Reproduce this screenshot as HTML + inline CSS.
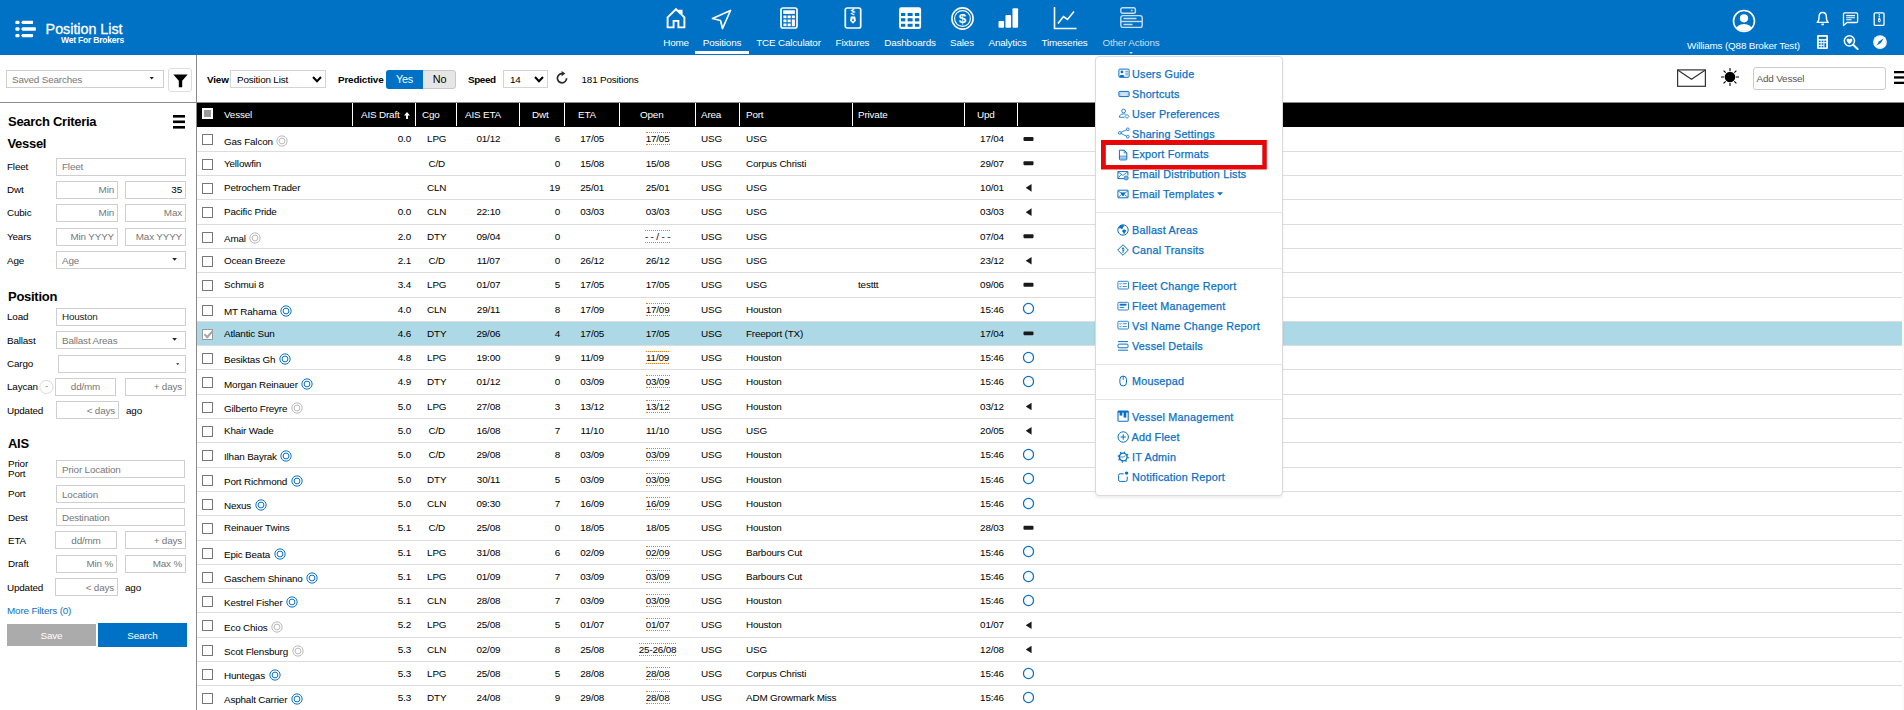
<!DOCTYPE html>
<html lang="en"><head><meta charset="utf-8"><title>Position List</title>
<style>
html,body{margin:0;padding:0}
body{width:1904px;height:710px;overflow:hidden;position:relative;background:#fff;color:#000;font:9.9px/1 "Liberation Sans",sans-serif;letter-spacing:-0.17px}
*{box-sizing:border-box}
i{font-style:normal}
.abs{position:absolute}
/* header */
#hdr{position:absolute;left:0;top:0;width:1904px;height:55px;background:#0072c6;color:#fff}
#hdr svg{position:absolute;overflow:visible}
.title{position:absolute;left:45.6px;top:21.1px;font-size:14.4px;line-height:16px;letter-spacing:-.05px;white-space:nowrap;-webkit-text-stroke:.3px #fff}
.subtitle{position:absolute;left:61px;top:34.6px;font-size:8.5px;line-height:10px;font-weight:bold;letter-spacing:-0.2px;white-space:nowrap}
.nav{position:absolute;top:37px;height:12px;line-height:12px;white-space:nowrap;text-align:center;transform:translateX(-50%)}
.nav.dim{color:#c9def1}
.uname{position:absolute;left:1687px;top:40px;line-height:12px;white-space:nowrap}
.ul{position:absolute;left:695px;top:51px;width:54px;height:3px;background:#fff}
/* sidebar */
#side{position:absolute;left:0;top:55px;width:197px;height:655px;border-right:1px solid #8a8a8a}
#side .hl{position:absolute;left:0;top:47px;width:196px;height:1px;background:#8a8a8a}
.lbl{position:absolute;left:7px;line-height:12px;white-space:nowrap}
.inp{position:absolute;border:1px solid #cfcfcf;background:#fff;line-height:16px;white-space:nowrap;color:#777;padding:0 3px}
.inp.r{text-align:right}
.inp.c{text-align:center}
.inp.v{color:#000}
.inp.l{padding-left:5px}
.h1{position:absolute;left:8px;font-weight:bold;font-size:13px;line-height:16px;letter-spacing:-0.28px;white-space:nowrap}
.caret{position:absolute;width:4.8px;height:2.8px;background:#222;clip-path:polygon(0 0,100% 0,50% 100%)}
/* toolbar */
.tb{position:absolute;white-space:nowrap;line-height:12px}
.tb.b{font-weight:bold}
.sel{position:absolute;border:1px solid #d4d4d4;background:#fff;line-height:15px;padding-left:6px;white-space:nowrap}
/* table */
.thead{position:absolute;left:197px;top:102px;width:1707px;height:25px;background:#000;color:#fff;border-top:1px solid #8a8a8a}
.th{position:absolute;top:0;line-height:23px;white-space:nowrap}
.vs{position:absolute;top:0;width:1px;height:23px;background:#fff}
.hcb{position:absolute;left:5px;top:5px;width:11px;height:11px;background:#fff;border:1px solid #fff}
.hcb:after{content:"";position:absolute;left:1px;top:1px;width:7px;height:7px;background:#9a9a9a}
.sort{position:relative;top:1px;margin-left:4px}
.tbody{position:absolute;left:197px;top:127px;width:1707px;height:583px;background:linear-gradient(#fafafa,#fafafa) right/2px 100% no-repeat}
.tr{position:absolute;left:0;width:1705px;height:24.3px;line-height:23.4px;border-bottom:1px solid #ddd}
.tr.hi{background:#add8e6}
.c{position:absolute;top:0;white-space:nowrap}
.cb{position:absolute;left:5px;top:7px;width:11px;height:11px;border:1px solid #767676;background:#fff;border-radius:.5px}
.cb.on{background:#fff;border-color:#9a9a9a}
.cb.on:after{content:"";position:absolute;left:2.6px;top:-0.6px;width:3.4px;height:7px;border:solid #a6a6a6;border-width:0 2.1px 2.1px 0;transform:rotate(42deg)}
.vn{left:27px}
.vn.low{top:2.1px}
.ring{position:relative;top:0px;margin-left:3.6px;vertical-align:-2px}
.dr{left:155px;width:59px;text-align:right}
.cg{left:219px;width:41.4px;text-align:center}
.ae{left:260px;width:62.8px;text-align:center}
.dw{left:322px;width:41px;text-align:right}
.et{left:367.7px;width:55px;text-align:center}
.op{left:422.6px;width:76px;text-align:center}
.ar{left:504px}
.po{left:549px}
.pr{left:661px}
.up{left:768.5px;width:53px;text-align:center}
.dot{font-weight:normal;display:inline-block;line-height:11px;border-top:1px dotted #f57c00;border-bottom:1px dotted #f57c00;padding:0}
.ic{position:absolute}
.dash{left:825.5px;top:8.6px;width:12px;height:6px;background:#1a1a1a;clip-path:inset(1px 1px 1.1px 1px round 1px)}
.tri{left:828.7px;top:8px;width:5.9px;height:7.6px;background:#1a1a1a;clip-path:polygon(100% 0,100% 100%,0 50%)}
.circ{left:824.8px;top:4.8px}
/* menu */
#menu{position:absolute;left:1095px;top:56px;width:188px;height:440px;background:#fff;border:1px solid #dadada;border-radius:4px;box-shadow:0 2px 3px rgba(0,0,0,.07);color:#0b70c4;font-size:10.8px;letter-spacing:.22px;-webkit-text-stroke:.25px #0b70c4}
.mi{position:absolute;left:36px;line-height:14px;white-space:nowrap}
.mic{position:absolute;left:22px;overflow:visible}
.sep{position:absolute;left:0;width:186px;height:1px;background:#e5e5e5}
#red{position:absolute;left:1100px;top:140px}

</style></head>
<body>
<div id="hdr">
<svg style="left:15px;top:20px" width="22" height="18" viewBox="0 0 22 18" fill="#fff">
<rect x="0.4" y="0.7" width="4.1" height="3.4" rx="1.2"/><rect x="0.4" y="7.3" width="4.1" height="3.4" rx="1.2"/><rect x="0.4" y="13.9" width="4.1" height="3.4" rx="1.2"/>
<path d="M6 2.4 L7.6 0.7 H17.3 Q18.1 0.7 18.1 1.5 V3.3 Q18.1 4.1 17.3 4.1 H7.6 Z"/>
<path d="M6 9 L7.6 7.3 H20.1 Q20.9 7.3 20.9 8.1 V9.9 Q20.9 10.7 20.1 10.7 H7.6 Z"/>
<path d="M6 15.6 L7.6 13.9 H17.3 Q18.1 13.9 18.1 14.7 V16.5 Q18.1 17.3 17.3 17.3 H7.6 Z"/>
</svg>
<div class="title">Position List</div>
<div class="subtitle">Wet For Brokers</div>

<!-- nav icons -->
<svg style="left:666px;top:7px" width="20" height="22" viewBox="0 0 20 22" fill="none" stroke="#fff" stroke-width="1.9" stroke-linejoin="miter"><path d="M1.6 10.4 L10 2.2 L13.4 5.5 V3.6 H15.6 V7.6 L18.4 10.4 V20.4 H12.4 V13.9 H7.6 V20.4 H1.6 Z"/><rect x="13.4" y="3.2" width="2.2" height="4" fill="#fff" stroke="none"/></svg>
<svg style="left:711px;top:9px" width="21" height="21" viewBox="0 0 21 21" fill="none" stroke="#fff" stroke-width="1.7" stroke-linejoin="round"><path d="M1.5 9.5 L19.5 1.5 L11.5 19.5 L9.5 11.5 Z"/></svg>
<svg style="left:780px;top:7px" width="18" height="22" viewBox="0 0 18 22" fill="none" stroke="#fff"><rect x="1" y="1" width="16" height="20" rx="2" stroke-width="1.7"/><rect x="3.2" y="3.3" width="11.7" height="3.6" fill="#fff" stroke="none"/><g fill="#fff" stroke="none"><rect x="3.4" y="8.5" width="3.1" height="2.7"/><rect x="7.6" y="8.5" width="3.1" height="2.7"/><rect x="11.8" y="8.5" width="3.1" height="2.7"/><rect x="3.4" y="12.5" width="3.1" height="2.7"/><rect x="7.6" y="12.5" width="3.1" height="2.7"/><rect x="11.8" y="12.5" width="3.1" height="6.7"/><rect x="3.4" y="16.5" width="3.1" height="2.7"/><rect x="7.6" y="16.5" width="3.1" height="2.7"/></g></svg>
<svg style="left:844px;top:7px" width="18" height="22" viewBox="0 0 18 22" fill="none" stroke="#fff"><rect x="1.3" y="1" width="15.4" height="20" rx="1.8" stroke-width="1.7"/><path d="M10.4 2 L7.6 3.5 L10.4 5 L7.6 6.5 L10.4 8" stroke-width="1.3"/><path d="M6.8 9.4 H11.2 L11.9 13.8 L9 16.8 L6.1 13.8 Z" fill="#fff" stroke="none"/><path d="M9 10.8 L10 13.4 L9 14.6 L8 13.4 Z" fill="#0072c6" stroke="none"/></svg>
<svg style="left:898px;top:7px" width="24" height="22" viewBox="0 0 24 22"><rect x="1.1" y="0.2" width="22" height="21.7" rx="2.2" fill="#fff"/><g fill="#0072c6"><rect x="3" y="6" width="4.3" height="3"/><rect x="9.6" y="6" width="5" height="3"/><rect x="16.9" y="6" width="4.4" height="3"/><rect x="3" y="11.2" width="4.3" height="3.2"/><rect x="9.6" y="11.2" width="5" height="3.2"/><rect x="16.9" y="11.2" width="4.4" height="3.2"/><rect x="3" y="16.8" width="4.3" height="3"/><rect x="9.6" y="16.8" width="5" height="3"/><rect x="16.9" y="16.8" width="4.4" height="3"/></g></svg>
<svg style="left:951px;top:6.6px" width="23" height="23" viewBox="0 0 23 23" fill="none" stroke="#fff"><circle cx="11.5" cy="11.5" r="10.6" stroke-width="1.6"/><circle cx="11.5" cy="11.5" r="7.9" stroke-width="1.1"/><text x="11.5" y="16.3" text-anchor="middle" font-family="Liberation Sans, sans-serif" font-weight="bold" font-size="13.5" fill="#fff" stroke="none" letter-spacing="0">$</text></svg>
<svg style="left:997.7px;top:8px" width="21" height="20" viewBox="0 0 21 20" fill="#fff"><rect x="0.5" y="13" width="5.6" height="6.8" rx="1"/><rect x="7.5" y="7" width="5.6" height="12.8" rx="1"/><rect x="14.5" y="0.3" width="5.6" height="19.5" rx="1"/></svg>
<svg style="left:1053px;top:7px" width="24" height="23" viewBox="0 0 24 23" fill="none" stroke="#fff" stroke-width="1.6"><path d="M1.5 0 V21.5 H23.5"/><path d="M5 16.5 L10.5 9.5 L14.5 12.5 L21 4.5"/></svg>
<svg style="left:1120px;top:7px" width="23" height="22" viewBox="0 0 23 22" fill="none" stroke="#c9def1" stroke-width="1.4"><rect x="0.8" y="0.8" width="14.6" height="5.4" rx="1.8"/><rect x="0.8" y="8.6" width="21.4" height="11.8" rx="2.2"/><path d="M0.8 14.5 H22.2"/><path d="M3.5 11.5 H16.5 M3.5 17.5 H12.5 M11 3.5 H12.6" stroke-width="1.3"/></svg>
<div class="nav" style="left:676px">Home</div>
<div class="nav" style="left:722px">Positions</div>
<div class="nav" style="left:788.5px">TCE Calculator</div>
<div class="nav" style="left:852.5px">Fixtures</div>
<div class="nav" style="left:910px">Dashboards</div>
<div class="nav" style="left:962px">Sales</div>
<div class="nav" style="left:1007.5px">Analytics</div>
<div class="nav" style="left:1064.5px">Timeseries</div>
<div class="nav dim" style="left:1131px">Other Actions</div>
<div class="ul"></div>
<svg style="left:1129.4px;top:52px" width="4" height="2" viewBox="0 0 4 2"><path d="M0 0 H4 L2 2 Z" fill="#c9def1"/></svg>

<!-- user -->
<svg style="left:1732px;top:9px" width="24" height="24" viewBox="0 0 24 24"><defs><clipPath id="uc"><circle cx="12" cy="12" r="10"/></clipPath></defs><circle cx="12" cy="12" r="10.5" fill="none" stroke="#fff" stroke-width="1.6"/><circle cx="12" cy="9.3" r="4.1" fill="#fff"/><ellipse cx="12" cy="21.5" rx="8.3" ry="6.6" fill="#fff" clip-path="url(#uc)"/></svg>
<div class="uname">Williams (Q88 Broker Test)</div>
<!-- bell -->
<svg style="left:1816px;top:11px" width="14" height="16" viewBox="0 0 14 16" fill="none" stroke="#fff" stroke-width="1.4" stroke-linejoin="round"><path d="M1.2 11.4 C2.9 10.4 3 8.5 3 6.2 C3 3.3 4.6 1.5 6.7 1.5 C8.8 1.5 10.4 3.3 10.4 6.2 C10.4 8.5 10.5 10.4 12.2 11.4 Z"/><path d="M5.4 13.4 H8" stroke-width="1.7"/></svg>
<!-- chat -->
<svg style="left:1842px;top:12px" width="17" height="15" viewBox="0 0 17 15" fill="none" stroke="#fff" stroke-width="1.3" stroke-linejoin="round"><path d="M2.5 .9 H14.5 Q15.6 .9 15.6 2 V9.4 Q15.6 10.5 14.5 10.5 H5 L1.5 13.6 V2 Q1.5 .9 2.5 .9 Z"/><path d="M4.2 3.6 H13 M4.2 5.7 H13 M4.2 7.8 H9.6" stroke-width="1.1"/></svg>
<!-- zip -->
<svg style="left:1873px;top:12px" width="12" height="14" viewBox="0 0 12 14" fill="none" stroke="#fff" stroke-width="1.3"><rect x="1.2" y="0.8" width="9.8" height="12.6" rx="1"/><path d="M6.3 2 V7" stroke-width="1.3" stroke-dasharray="1.2 .6"/><path d="M5.2 6.6 H7.4 L7.7 9.2 L6.3 10.6 L4.9 9.2 Z" fill="#fff" stroke="none"/><circle cx="6.3" cy="8.6" r=".7" fill="#0072c6" stroke="none"/></svg>
<!-- calc -->
<svg style="left:1817px;top:35px" width="11" height="14" viewBox="0 0 11 14"><rect x="0" y="0" width="11" height="14" rx="1.2" fill="#fff"/><g fill="#0072c6"><rect x="1.8" y="1.8" width="7.4" height="2.3"/><rect x="1.8" y="5.6" width="1.8" height="1.6"/><rect x="4.6" y="5.6" width="1.8" height="1.6"/><rect x="7.4" y="5.6" width="1.8" height="1.6"/><rect x="1.8" y="8.2" width="1.8" height="1.6"/><rect x="4.6" y="8.2" width="1.8" height="1.6"/><rect x="7.4" y="8.2" width="1.8" height="4.2"/><rect x="1.8" y="10.8" width="1.8" height="1.6"/><rect x="4.6" y="10.8" width="1.8" height="1.6"/></g></svg>
<!-- search -->
<svg style="left:1843px;top:34px" width="16" height="16" viewBox="0 0 16 16" fill="none" stroke="#fff"><circle cx="6.4" cy="6.8" r="5.1" stroke-width="1.5"/><path d="M10.2 10.8 L14.6 15" stroke-width="2" stroke-linecap="round"/><path d="M6.5 9.9 C2.6 7.2 3.4 4.4 5 4.4 C6 4.4 6.5 5.3 6.5 5.3 C6.5 5.3 7 4.4 8 4.4 C9.6 4.4 10.4 7.2 6.5 9.9 Z" fill="#fff" stroke="none"/></svg>
<!-- compass -->
<svg style="left:1873px;top:35px" width="14" height="14" viewBox="0 0 14 14"><circle cx="7" cy="7.1" r="6.9" fill="#fff"/><circle cx="7" cy="7.1" r="5.6" fill="none" stroke="#0072c6" stroke-width=".5" stroke-dasharray=".6 1.6" opacity=".6"/><path d="M3.4 10.6 L6.2 6.2 L10.6 3.6 L7.8 7.9 Z" fill="#0072c6"/></svg>
</div>
<div id="side">
<div class="hl"></div>
<div class="inp l" style="left:6px;top:15px;width:158px;height:18px;padding-left:5px;line-height:17.4px">Saved Searches</div>
<i class="caret" style="left:149.3px;top:21.8px"></i>
<div class="abs" style="left:168.4px;top:13px;width:23.4px;height:24px;border:1px solid #ddd;border-radius:3px;background:#fff"></div>
<svg class="abs" style="left:172.5px;top:18.7px" width="15" height="14" viewBox="0 0 15 14"><path d="M0.3 0.5 H14.7 L9.2 6.8 V13.2 H5.8 V6.8 Z" fill="#000"/></svg>

<div class="h1" style="top:58.7px">Search Criteria</div>
<svg class="abs" style="left:173px;top:60px" width="12" height="14" viewBox="0 0 12 14"><rect x="0" y="0" width="12" height="2.6" fill="#000"/><rect x="0" y="5.5" width="12" height="2.6" fill="#000"/><rect x="0" y="11" width="12" height="2.6" fill="#000"/></svg>
<div class="h1" style="top:81px;left:7.4px">Vessel</div>

<div class="lbl" style="top:106px">Fleet</div>
<div class="inp l" style="left:56px;top:103px;width:130px;height:18px">Fleet</div>
<div class="lbl" style="top:129px">Dwt</div>
<div class="inp r" style="left:56px;top:126px;width:62px;height:18px">Min</div>
<div class="inp r v" style="left:125px;top:126px;width:61px;height:18px">35</div>
<div class="lbl" style="top:152px">Cubic</div>
<div class="inp r" style="left:56px;top:149px;width:62px;height:18px">Min</div>
<div class="inp r" style="left:125px;top:149px;width:61px;height:18px">Max</div>
<div class="lbl" style="top:176px">Years</div>
<div class="inp r" style="left:56px;top:173px;width:62px;height:18px">Min YYYY</div>
<div class="inp r" style="left:125px;top:173px;width:61px;height:18px">Max YYYY</div>
<div class="lbl" style="top:199.6px">Age</div>
<div class="inp l" style="left:56px;top:196px;width:130px;height:18px;line-height:17px">Age</div>
<i class="caret" style="left:172.2px;top:202.9px"></i>

<div class="h1" style="top:233.7px">Position</div>
<div class="lbl" style="top:256px">Load</div>
<div class="inp l v" style="left:56px;top:253px;width:130px;height:18px;color:#222">Houston</div>
<div class="lbl" style="top:280px">Ballast</div>
<div class="inp l" style="left:56px;top:276px;width:130px;height:18px;line-height:17px">Ballast Areas</div>
<i class="caret" style="left:172.2px;top:282.9px"></i>
<div class="lbl" style="top:303px">Cargo</div>
<div class="inp" style="left:58px;top:300px;width:128px;height:18px"></div>
<i class="caret" style="left:176.1px;top:308.2px;width:3.2px;height:1.9px"></i>
<div class="lbl" style="top:326px">Laycan</div>
<svg class="abs" style="left:39px;top:324px" width="16" height="16" viewBox="0 0 16 16"><circle cx="7.4" cy="8" r="6.6" fill="#fff" stroke="#d9d9d9" stroke-width="1"/></svg><div class="abs" style="left:40px;top:326px;width:13px;height:13px;color:#888;text-align:center;line-height:10px">-</div>
<div class="inp c" style="left:55px;top:323px;width:61px;height:18px">dd/mm</div>
<div class="inp r" style="left:125px;top:323px;width:61px;height:18px">+ days</div>
<div class="lbl" style="top:350px">Updated</div>
<div class="inp r" style="left:56px;top:346px;width:63px;height:18px;line-height:18px">&lt; days</div>
<div class="lbl" style="left:126px;top:350px">ago</div>

<div class="h1" style="top:380.7px">AIS</div>
<div class="lbl" style="left:8px;top:403.7px;line-height:10.4px">Prior<br>Port</div>
<div class="inp l" style="left:56px;top:405px;width:129px;height:18px;padding-left:5px;line-height:17px">Prior Location</div>
<div class="lbl" style="left:8px;top:433px">Port</div>
<div class="inp l" style="left:56px;top:430px;width:129px;height:18px;padding-left:5px;line-height:17px">Location</div>
<div class="lbl" style="left:8px;top:457px">Dest</div>
<div class="inp l" style="left:56px;top:453px;width:129px;height:18px;padding-left:5px;line-height:17px">Destination</div>
<div class="lbl" style="left:8px;top:480px">ETA</div>
<div class="inp c" style="left:55px;top:476px;width:62px;height:18px;line-height:17px">dd/mm</div>
<div class="inp r" style="left:125px;top:476px;width:61px;height:18px;line-height:17px">+ days</div>
<div class="lbl" style="left:8px;top:503px">Draft</div>
<div class="inp r" style="left:56px;top:500px;width:61px;height:18px">Min %</div>
<div class="inp r" style="left:125px;top:500px;width:61px;height:18px">Max %</div>
<div class="lbl" style="top:527px">Updated</div>
<div class="inp r" style="left:55px;top:523px;width:63px;height:18px;line-height:17.6px">&lt; days</div>
<div class="lbl" style="left:125px;top:527px">ago</div>
<div class="lbl" style="top:550px;color:#0b70c4">More Filters (0)</div>
<div class="abs" style="left:7px;top:569px;width:89px;height:22px;background:#ababab;color:#fff;text-align:center;line-height:23.4px">Save</div>
<div class="abs" style="left:98px;top:568px;width:89px;height:24px;background:#0072c6;color:#fff;text-align:center;line-height:25.4px">Search</div>
</div>
<div id="tbar">
<div class="tb b" style="left:207px;top:73.6px">View</div>
<div class="sel" style="left:230px;top:70px;width:96px;height:18px;line-height:17px">Position List</div>
<svg class="abs" style="left:312px;top:76px" width="10" height="7" viewBox="0 0 10 7"><path d="M1 1 L5 5.2 L9 1" fill="none" stroke="#000" stroke-width="2"/></svg>
<div class="tb b" style="left:338px;top:73.6px">Predictive</div>
<div class="abs" style="left:386px;top:70px;width:70px;height:19px;border-radius:3px;background:#e6e6e6;border:1px solid #c8c8c8"></div>
<div class="abs" style="left:386px;top:70px;width:37px;height:19px;border-radius:3px 0 0 3px;background:#0072c6;color:#fff;font-size:10.8px;line-height:18px;text-align:center">Yes</div>
<div class="abs" style="left:423px;top:70px;width:33px;height:19px;font-size:10.8px;line-height:18px;text-align:center">No</div>
<div class="tb b" style="left:468px;top:73.6px;letter-spacing:-.4px">Speed</div>
<div class="sel" style="left:503px;top:70px;width:45px;height:18px;line-height:17px">14</div>
<svg class="abs" style="left:534px;top:76px" width="10" height="7" viewBox="0 0 10 7"><path d="M1 1 L5 5.2 L9 1" fill="none" stroke="#000" stroke-width="2"/></svg>
<svg class="abs" style="left:556px;top:71px" width="12" height="13" viewBox="0 0 12 13"><path d="M6.3 2.6 A4.6 4.6 0 1 0 10.6 7.2" fill="none" stroke="#2a2a2a" stroke-width="1.7"/><path d="M5.6 0 L9.4 2.6 L5.6 5.2 Z" fill="#2a2a2a"/></svg>
<div class="tb" style="left:581.5px;top:73.6px">181 Positions</div>

<svg class="abs" style="left:1677px;top:68.5px" width="29" height="18" viewBox="0 0 29 18" fill="none" stroke="#333" stroke-width="1.2"><rect x="0.6" y="0.9" width="27.8" height="16.4"/><path d="M1 1.3 L14.5 10.3 L28 1.3"/></svg>
<svg class="abs" style="left:1720px;top:67px" width="20" height="20" viewBox="0 0 20 20"><circle cx="10" cy="10" r="5.3" fill="#000"/><g stroke="#000" stroke-width="1.1"><path d="M10 1 V4 M10 16 V19 M1 10 H4 M16 10 H19 M3.6 3.6 L5.7 5.7 M14.3 14.3 L16.4 16.4 M3.6 16.4 L5.7 14.3 M14.3 5.7 L16.4 3.6"/></g></svg>
<div class="abs" style="left:1753px;top:67px;width:133px;height:23px;border:1px solid #ccc;border-radius:3px;color:#555;line-height:22px;padding-left:2.6px">Add Vessel</div>
<svg class="abs" style="left:1894px;top:71px" width="10" height="14" viewBox="0 0 10 14"><rect x="0" y="0" width="12" height="2.3" fill="#000"/><rect x="0" y="5.3" width="12" height="2.3" fill="#000"/><rect x="0" y="10.7" width="12" height="2.3" fill="#000"/></svg>
</div>
<div class="thead">
<span class="hcb"></span>
<span class="th" style="left:27px">Vessel</span>
<span class="th" style="left:164px">AIS Draft<svg class="sort" width="6" height="7" viewBox="0 0 7 8"><path d="M3.5 0 L7 4 H4.6 V8 H2.4 V4 H0 Z" fill="#fff"/></svg></span>
<span class="th" style="left:225px">Cgo</span>
<span class="th" style="left:268px">AIS ETA</span>
<span class="th" style="left:335px">Dwt</span>
<span class="th" style="left:381px">ETA</span>
<span class="th" style="left:443px">Open</span>
<span class="th" style="left:504px">Area</span>
<span class="th" style="left:549px">Port</span>
<span class="th" style="left:661px">Private</span>
<span class="th" style="left:780px">Upd</span>
<i class="vs" style="left:155px"></i><i class="vs" style="left:218px"></i><i class="vs" style="left:259px"></i><i class="vs" style="left:322px"></i><i class="vs" style="left:367px"></i><i class="vs" style="left:422px"></i><i class="vs" style="left:498px"></i><i class="vs" style="left:542px"></i><i class="vs" style="left:655px"></i><i class="vs" style="left:767px"></i><i class="vs" style="left:820px"></i>
</div>
<div class="tbody">
<div class="tr" style="top:0.45px"><span class="cb"></span><span class="c vn low">Gas Falcon<svg class="ring" width="12" height="12" viewBox="0 0 12 12"><circle cx="6" cy="6" r="5.15" fill="none" stroke="#b9b9b9" stroke-width="1"/><circle cx="6" cy="6" r="2.9" fill="none" stroke="#b9b9b9" stroke-width="1"/></svg></span><span class="c dr">0.0</span><span class="c cg">LPG</span><span class="c ae">01/12</span><span class="c dw">6</span><span class="c et">17/05</span><span class="c op"><b class="dot">17/05</b></span><span class="c ar">USG</span><span class="c po">USG</span><span class="c pr"></span><span class="c up">17/04</span><i class="ic dash"></i></div>
<div class="tr" style="top:24.75px"><span class="cb"></span><span class="c vn">Yellowfin</span><span class="c dr"></span><span class="c cg">C/D</span><span class="c ae"></span><span class="c dw">0</span><span class="c et">15/08</span><span class="c op">15/08</span><span class="c ar">USG</span><span class="c po">Corpus Christi</span><span class="c pr"></span><span class="c up">29/07</span><i class="ic dash"></i></div>
<div class="tr" style="top:49.05px"><span class="cb"></span><span class="c vn">Petrochem Trader</span><span class="c dr"></span><span class="c cg">CLN</span><span class="c ae"></span><span class="c dw">19</span><span class="c et">25/01</span><span class="c op">25/01</span><span class="c ar">USG</span><span class="c po">USG</span><span class="c pr"></span><span class="c up">10/01</span><i class="ic tri"></i></div>
<div class="tr" style="top:73.35px"><span class="cb"></span><span class="c vn">Pacific Pride</span><span class="c dr">0.0</span><span class="c cg">CLN</span><span class="c ae">22:10</span><span class="c dw">0</span><span class="c et">03/03</span><span class="c op">03/03</span><span class="c ar">USG</span><span class="c po">USG</span><span class="c pr"></span><span class="c up">03/03</span><i class="ic tri"></i></div>
<div class="tr" style="top:97.65px"><span class="cb"></span><span class="c vn low">Amal<svg class="ring" width="12" height="12" viewBox="0 0 12 12"><circle cx="6" cy="6" r="5.15" fill="none" stroke="#b9b9b9" stroke-width="1"/><circle cx="6" cy="6" r="2.9" fill="none" stroke="#b9b9b9" stroke-width="1"/></svg></span><span class="c dr">2.0</span><span class="c cg">DTY</span><span class="c ae">09/04</span><span class="c dw">0</span><span class="c et"></span><span class="c op"><b class="dot">- - / - -</b></span><span class="c ar">USG</span><span class="c po">USG</span><span class="c pr"></span><span class="c up">07/04</span><i class="ic dash"></i></div>
<div class="tr" style="top:121.95px"><span class="cb"></span><span class="c vn">Ocean Breeze</span><span class="c dr">2.1</span><span class="c cg">C/D</span><span class="c ae">11/07</span><span class="c dw">0</span><span class="c et">26/12</span><span class="c op">26/12</span><span class="c ar">USG</span><span class="c po">USG</span><span class="c pr"></span><span class="c up">23/12</span><i class="ic tri"></i></div>
<div class="tr" style="top:146.25px"><span class="cb"></span><span class="c vn">Schmui 8</span><span class="c dr">3.4</span><span class="c cg">LPG</span><span class="c ae">01/07</span><span class="c dw">5</span><span class="c et">17/05</span><span class="c op">17/05</span><span class="c ar">USG</span><span class="c po">USG</span><span class="c pr">testtt</span><span class="c up">09/06</span><i class="ic dash"></i></div>
<div class="tr" style="top:170.55px"><span class="cb"></span><span class="c vn low">MT Rahama<svg class="ring" width="12" height="12" viewBox="0 0 12 12"><circle cx="6" cy="6" r="5.15" fill="none" stroke="#0b70c4" stroke-width="1"/><circle cx="6" cy="6" r="2.9" fill="none" stroke="#0b70c4" stroke-width="1"/></svg></span><span class="c dr">4.0</span><span class="c cg">CLN</span><span class="c ae">29/11</span><span class="c dw">8</span><span class="c et">17/09</span><span class="c op"><b class="dot">17/09</b></span><span class="c ar">USG</span><span class="c po">Houston</span><span class="c pr"></span><span class="c up">15:46</span><svg class="ic circ" width="13" height="13" viewBox="0 0 13 13"><circle cx="6.5" cy="6.5" r="5.05" fill="none" stroke="#0b70c4" stroke-width="1.25"/></svg></div>
<div class="tr hi" style="top:194.85px"><span class="cb on"></span><span class="c vn">Atlantic Sun</span><span class="c dr">4.6</span><span class="c cg">DTY</span><span class="c ae">29/06</span><span class="c dw">4</span><span class="c et">17/05</span><span class="c op">17/05</span><span class="c ar">USG</span><span class="c po">Freeport (TX)</span><span class="c pr"></span><span class="c up">17/04</span><i class="ic dash"></i></div>
<div class="tr" style="top:219.15px"><span class="cb"></span><span class="c vn low">Besiktas Gh<svg class="ring" width="12" height="12" viewBox="0 0 12 12"><circle cx="6" cy="6" r="5.15" fill="none" stroke="#0b70c4" stroke-width="1"/><circle cx="6" cy="6" r="2.9" fill="none" stroke="#0b70c4" stroke-width="1"/></svg></span><span class="c dr">4.8</span><span class="c cg">LPG</span><span class="c ae">19:00</span><span class="c dw">9</span><span class="c et">11/09</span><span class="c op"><b class="dot">11/09</b></span><span class="c ar">USG</span><span class="c po">Houston</span><span class="c pr"></span><span class="c up">15:46</span><svg class="ic circ" width="13" height="13" viewBox="0 0 13 13"><circle cx="6.5" cy="6.5" r="5.05" fill="none" stroke="#0b70c4" stroke-width="1.25"/></svg></div>
<div class="tr" style="top:243.45px"><span class="cb"></span><span class="c vn low">Morgan Reinauer<svg class="ring" width="12" height="12" viewBox="0 0 12 12"><circle cx="6" cy="6" r="5.15" fill="none" stroke="#0b70c4" stroke-width="1"/><circle cx="6" cy="6" r="2.9" fill="none" stroke="#0b70c4" stroke-width="1"/></svg></span><span class="c dr">4.9</span><span class="c cg">DTY</span><span class="c ae">01/12</span><span class="c dw">0</span><span class="c et">03/09</span><span class="c op"><b class="dot">03/09</b></span><span class="c ar">USG</span><span class="c po">Houston</span><span class="c pr"></span><span class="c up">15:46</span><svg class="ic circ" width="13" height="13" viewBox="0 0 13 13"><circle cx="6.5" cy="6.5" r="5.05" fill="none" stroke="#0b70c4" stroke-width="1.25"/></svg></div>
<div class="tr" style="top:267.75px"><span class="cb"></span><span class="c vn low">Gilberto Freyre<svg class="ring" width="12" height="12" viewBox="0 0 12 12"><circle cx="6" cy="6" r="5.15" fill="none" stroke="#b9b9b9" stroke-width="1"/><circle cx="6" cy="6" r="2.9" fill="none" stroke="#b9b9b9" stroke-width="1"/></svg></span><span class="c dr">5.0</span><span class="c cg">LPG</span><span class="c ae">27/08</span><span class="c dw">3</span><span class="c et">13/12</span><span class="c op"><b class="dot">13/12</b></span><span class="c ar">USG</span><span class="c po">Houston</span><span class="c pr"></span><span class="c up">03/12</span><i class="ic tri"></i></div>
<div class="tr" style="top:292.05px"><span class="cb"></span><span class="c vn">Khair Wade</span><span class="c dr">5.0</span><span class="c cg">C/D</span><span class="c ae">16/08</span><span class="c dw">7</span><span class="c et">11/10</span><span class="c op">11/10</span><span class="c ar">USG</span><span class="c po">USG</span><span class="c pr"></span><span class="c up">20/05</span><i class="ic tri"></i></div>
<div class="tr" style="top:316.35px"><span class="cb"></span><span class="c vn low">Ilhan Bayrak<svg class="ring" width="12" height="12" viewBox="0 0 12 12"><circle cx="6" cy="6" r="5.15" fill="none" stroke="#0b70c4" stroke-width="1"/><circle cx="6" cy="6" r="2.9" fill="none" stroke="#0b70c4" stroke-width="1"/></svg></span><span class="c dr">5.0</span><span class="c cg">C/D</span><span class="c ae">29/08</span><span class="c dw">8</span><span class="c et">03/09</span><span class="c op"><b class="dot">03/09</b></span><span class="c ar">USG</span><span class="c po">Houston</span><span class="c pr"></span><span class="c up">15:46</span><svg class="ic circ" width="13" height="13" viewBox="0 0 13 13"><circle cx="6.5" cy="6.5" r="5.05" fill="none" stroke="#0b70c4" stroke-width="1.25"/></svg></div>
<div class="tr" style="top:340.65px"><span class="cb"></span><span class="c vn low">Port Richmond<svg class="ring" width="12" height="12" viewBox="0 0 12 12"><circle cx="6" cy="6" r="5.15" fill="none" stroke="#0b70c4" stroke-width="1"/><circle cx="6" cy="6" r="2.9" fill="none" stroke="#0b70c4" stroke-width="1"/></svg></span><span class="c dr">5.0</span><span class="c cg">DTY</span><span class="c ae">30/11</span><span class="c dw">5</span><span class="c et">03/09</span><span class="c op"><b class="dot">03/09</b></span><span class="c ar">USG</span><span class="c po">Houston</span><span class="c pr"></span><span class="c up">15:46</span><svg class="ic circ" width="13" height="13" viewBox="0 0 13 13"><circle cx="6.5" cy="6.5" r="5.05" fill="none" stroke="#0b70c4" stroke-width="1.25"/></svg></div>
<div class="tr" style="top:364.95px"><span class="cb"></span><span class="c vn low">Nexus<svg class="ring" width="12" height="12" viewBox="0 0 12 12"><circle cx="6" cy="6" r="5.15" fill="none" stroke="#0b70c4" stroke-width="1"/><circle cx="6" cy="6" r="2.9" fill="none" stroke="#0b70c4" stroke-width="1"/></svg></span><span class="c dr">5.0</span><span class="c cg">CLN</span><span class="c ae">09:30</span><span class="c dw">7</span><span class="c et">16/09</span><span class="c op"><b class="dot">16/09</b></span><span class="c ar">USG</span><span class="c po">Houston</span><span class="c pr"></span><span class="c up">15:46</span><svg class="ic circ" width="13" height="13" viewBox="0 0 13 13"><circle cx="6.5" cy="6.5" r="5.05" fill="none" stroke="#0b70c4" stroke-width="1.25"/></svg></div>
<div class="tr" style="top:389.25px"><span class="cb"></span><span class="c vn">Reinauer Twins</span><span class="c dr">5.1</span><span class="c cg">C/D</span><span class="c ae">25/08</span><span class="c dw">0</span><span class="c et">18/05</span><span class="c op">18/05</span><span class="c ar">USG</span><span class="c po">Houston</span><span class="c pr"></span><span class="c up">28/03</span><i class="ic dash"></i></div>
<div class="tr" style="top:413.55px"><span class="cb"></span><span class="c vn low">Epic Beata<svg class="ring" width="12" height="12" viewBox="0 0 12 12"><circle cx="6" cy="6" r="5.15" fill="none" stroke="#0b70c4" stroke-width="1"/><circle cx="6" cy="6" r="2.9" fill="none" stroke="#0b70c4" stroke-width="1"/></svg></span><span class="c dr">5.1</span><span class="c cg">LPG</span><span class="c ae">31/08</span><span class="c dw">6</span><span class="c et">02/09</span><span class="c op"><b class="dot">02/09</b></span><span class="c ar">USG</span><span class="c po">Barbours Cut</span><span class="c pr"></span><span class="c up">15:46</span><svg class="ic circ" width="13" height="13" viewBox="0 0 13 13"><circle cx="6.5" cy="6.5" r="5.05" fill="none" stroke="#0b70c4" stroke-width="1.25"/></svg></div>
<div class="tr" style="top:437.85px"><span class="cb"></span><span class="c vn low">Gaschem Shinano<svg class="ring" width="12" height="12" viewBox="0 0 12 12"><circle cx="6" cy="6" r="5.15" fill="none" stroke="#0b70c4" stroke-width="1"/><circle cx="6" cy="6" r="2.9" fill="none" stroke="#0b70c4" stroke-width="1"/></svg></span><span class="c dr">5.1</span><span class="c cg">LPG</span><span class="c ae">01/09</span><span class="c dw">7</span><span class="c et">03/09</span><span class="c op"><b class="dot">03/09</b></span><span class="c ar">USG</span><span class="c po">Barbours Cut</span><span class="c pr"></span><span class="c up">15:46</span><svg class="ic circ" width="13" height="13" viewBox="0 0 13 13"><circle cx="6.5" cy="6.5" r="5.05" fill="none" stroke="#0b70c4" stroke-width="1.25"/></svg></div>
<div class="tr" style="top:462.15px"><span class="cb"></span><span class="c vn low">Kestrel Fisher<svg class="ring" width="12" height="12" viewBox="0 0 12 12"><circle cx="6" cy="6" r="5.15" fill="none" stroke="#0b70c4" stroke-width="1"/><circle cx="6" cy="6" r="2.9" fill="none" stroke="#0b70c4" stroke-width="1"/></svg></span><span class="c dr">5.1</span><span class="c cg">CLN</span><span class="c ae">28/08</span><span class="c dw">7</span><span class="c et">03/09</span><span class="c op"><b class="dot">03/09</b></span><span class="c ar">USG</span><span class="c po">Houston</span><span class="c pr"></span><span class="c up">15:46</span><svg class="ic circ" width="13" height="13" viewBox="0 0 13 13"><circle cx="6.5" cy="6.5" r="5.05" fill="none" stroke="#0b70c4" stroke-width="1.25"/></svg></div>
<div class="tr" style="top:486.45px"><span class="cb"></span><span class="c vn low">Eco Chios<svg class="ring" width="12" height="12" viewBox="0 0 12 12"><circle cx="6" cy="6" r="5.15" fill="none" stroke="#b9b9b9" stroke-width="1"/><circle cx="6" cy="6" r="2.9" fill="none" stroke="#b9b9b9" stroke-width="1"/></svg></span><span class="c dr">5.2</span><span class="c cg">LPG</span><span class="c ae">25/08</span><span class="c dw">5</span><span class="c et">01/07</span><span class="c op"><b class="dot">01/07</b></span><span class="c ar">USG</span><span class="c po">Houston</span><span class="c pr"></span><span class="c up">01/07</span><i class="ic tri"></i></div>
<div class="tr" style="top:510.75px"><span class="cb"></span><span class="c vn low">Scot Flensburg<svg class="ring" width="12" height="12" viewBox="0 0 12 12"><circle cx="6" cy="6" r="5.15" fill="none" stroke="#b9b9b9" stroke-width="1"/><circle cx="6" cy="6" r="2.9" fill="none" stroke="#b9b9b9" stroke-width="1"/></svg></span><span class="c dr">5.3</span><span class="c cg">CLN</span><span class="c ae">02/09</span><span class="c dw">8</span><span class="c et">25/08</span><span class="c op"><b class="dot">25-26/08</b></span><span class="c ar">USG</span><span class="c po">USG</span><span class="c pr"></span><span class="c up">12/08</span><i class="ic tri"></i></div>
<div class="tr" style="top:535.05px"><span class="cb"></span><span class="c vn low">Huntegas<svg class="ring" width="12" height="12" viewBox="0 0 12 12"><circle cx="6" cy="6" r="5.15" fill="none" stroke="#0b70c4" stroke-width="1"/><circle cx="6" cy="6" r="2.9" fill="none" stroke="#0b70c4" stroke-width="1"/></svg></span><span class="c dr">5.3</span><span class="c cg">LPG</span><span class="c ae">25/08</span><span class="c dw">5</span><span class="c et">28/08</span><span class="c op"><b class="dot">28/08</b></span><span class="c ar">USG</span><span class="c po">Corpus Christi</span><span class="c pr"></span><span class="c up">15:46</span><svg class="ic circ" width="13" height="13" viewBox="0 0 13 13"><circle cx="6.5" cy="6.5" r="5.05" fill="none" stroke="#0b70c4" stroke-width="1.25"/></svg></div>
<div class="tr" style="top:559.35px"><span class="cb"></span><span class="c vn low">Asphalt Carrier<svg class="ring" width="12" height="12" viewBox="0 0 12 12"><circle cx="6" cy="6" r="5.15" fill="none" stroke="#0b70c4" stroke-width="1"/><circle cx="6" cy="6" r="2.9" fill="none" stroke="#0b70c4" stroke-width="1"/></svg></span><span class="c dr">5.3</span><span class="c cg">DTY</span><span class="c ae">24/08</span><span class="c dw">9</span><span class="c et">29/08</span><span class="c op"><b class="dot">28/08</b></span><span class="c ar">USG</span><span class="c po">ADM Growmark Miss</span><span class="c pr"></span><span class="c up">15:46</span><svg class="ic circ" width="13" height="13" viewBox="0 0 13 13"><circle cx="6.5" cy="6.5" r="5.05" fill="none" stroke="#0b70c4" stroke-width="1.25"/></svg></div>
</div>
<div id="menu">
<div class="mi" style="top:10px">Users Guide</div>
<div class="mi" style="top:30px">Shortcuts</div>
<div class="mi" style="top:50px">User Preferences</div>
<div class="mi" style="top:70px">Sharing Settings</div>
<div class="mi" style="top:90px">Export Formats</div>
<div class="mi" style="top:110px">Email Distribution Lists</div>
<div class="mi" style="top:130px">Email Templates<svg width="6" height="4" viewBox="0 0 6 4" style="margin-left:3px;vertical-align:2px"><path d="M0 0.3 H6 L3 3.6 Z" fill="#0b70c4"/></svg></div>
<div class="sep" style="top:155px"></div>
<div class="mi" style="top:166px">Ballast Areas</div>
<div class="mi" style="top:186px">Canal Transits</div>
<div class="sep" style="top:211px"></div>
<div class="mi" style="top:222px">Fleet Change Report</div>
<div class="mi" style="top:242px">Fleet Management</div>
<div class="mi" style="top:262px">Vsl Name Change Report</div>
<div class="mi" style="top:282px">Vessel Details</div>
<div class="sep" style="top:307px"></div>
<div class="mi" style="top:317px">Mousepad</div>
<div class="sep" style="top:342px"></div>
<div class="mi" style="top:353px">Vessel Management</div>
<div class="mi" style="top:373px;left:35.5px">Add Fleet</div>
<div class="mi" style="top:393px">IT Admin</div>
<div class="mi" style="top:413px">Notification Report</div>
<svg class="mic" style="left:21.6px;top:10.4px" width="12" height="12" viewBox="0 0 12 12" fill="none" stroke="#0b70c4" stroke-width="1.0"><rect x=".9" y="2.1" width="10.2" height="8.2" rx="1"/><circle cx="3.9" cy="4.9" r="1.4" fill="#0b70c4" stroke="none"/><path d="M1.4 9.9 C1.4 7 6.4 7 6.4 9.9 Z" fill="#0b70c4" stroke="none"/><path d="M7.3 4.3 H10 M7.3 6.1 H10 M7.3 7.9 H10" stroke-width=".7"/></svg>
<svg class="mic" style="left:21.6px;top:30.9px" width="12" height="12" viewBox="0 0 12 12" fill="none" stroke="#0b70c4" stroke-width="1.0"><rect x=".9" y="3.4" width="10.2" height="5.2" rx=".9" fill="#0b70c4" fill-opacity=".3"/><path d="M2.4 5.1 H9.6" stroke="#fff" stroke-width=".8" stroke-dasharray="1 .7"/><path d="M3.4 6.9 H8.6" stroke="#fff" stroke-width=".8"/></svg>
<svg class="mic" style="left:21.6px;top:51.2px" width="12" height="12" viewBox="0 0 12 12" fill="none" stroke="#0b70c4" stroke-width="1.0"><g stroke-width=".85"><circle cx="5.6" cy="3" r="1.9"/><path d="M7.6 6.2 C7 6 6.4 5.9 5.6 5.9 C3.1 5.9 1.4 7 1.4 9.3 H6.4"/><path d="M9 6.4 L11 8.4 L9 10.4 L7 8.4 Z"/></g></svg>
<svg class="mic" style="left:21.6px;top:70.4px" width="12" height="12" viewBox="0 0 12 12" fill="none" stroke="#0b70c4" stroke-width="1.0"><g stroke-width=".85"><path d="M3 5.3 L8.6 2.8 M3 6.5 L8.6 9.2"/><circle cx="1.8" cy="5.9" r="1.35"/><circle cx="9.8" cy="2.3" r="1.35"/><circle cx="9.8" cy="9.7" r="1.35"/></g></svg>
<svg class="mic" style="left:21.3px;top:91.5px" width="12" height="12" viewBox="0 0 12 12" fill="none" stroke="#0b70c4" stroke-width="1.0"><path d="M2.4 1.2 H7.2 L9.8 3.8 V10.1 Q9.8 10.9 9 10.9 H3.2 Q2.4 10.9 2.4 10.1 Z"/><path d="M7.2 1.2 V3.8 H9.8 M2.4 7.2 H9.8 M2.4 9.1 H9.8" stroke-width=".8"/></svg>
<svg class="mic" style="left:21.3px;top:111.7px" width="12" height="12" viewBox="0 0 12 12" fill="none" stroke="#0b70c4" stroke-width="1.0"><path d="M7 9.6 H.9 V2.6 H10.9 V6.5"/><path d="M.9 2.8 L5.9 6.4 L10.9 2.8 M.9 9.4 L4.3 5.4" stroke-width=".8"/><circle cx="9.2" cy="9" r="2.1" fill="#0b70c4" fill-opacity=".55" stroke-width=".7"/></svg>
<svg class="mic" style="left:21.3px;top:131.2px" width="12" height="12" viewBox="0 0 12 12" fill="none" stroke="#0b70c4" stroke-width="1.0"><rect x=".9" y="2.2" width="10.2" height="7.6" rx=".6"/><path d="M.9 2.6 L4.2 5.2 M11.1 2.6 L7.8 5.2 M.9 9.6 L4 6.9 M11.1 9.6 L8 6.9" stroke-width=".8"/><path d="M6 8.2 C3.2 6.2 3.6 4.3 4.9 4.3 C5.6 4.3 6 5 6 5 C6 5 6.4 4.3 7.1 4.3 C8.4 4.3 8.8 6.2 6 8.2 Z" fill="#0b70c4" stroke="none"/></svg>
<svg class="mic" style="left:21.3px;top:166.5px" width="12" height="12" viewBox="0 0 12 12" fill="none" stroke="#0b70c4" stroke-width="1.0"><circle cx="6" cy="6" r="5.2" stroke-width="1"/><path d="M2 2.8 C3 1.5 4.8 .9 6.4 1 L7.2 2.2 L5.8 3.2 L6 4.4 L4.6 5 L3.6 4.2 L2.2 4.6 Z M5.6 5.8 L8 5.6 L9.2 6.8 L8.2 8.6 L7 10.2 L6.2 8.6 L5.2 7.4 Z" fill="#0b70c4" stroke="none"/></svg>
<svg class="mic" style="left:21.3px;top:186.6px" width="12" height="12" viewBox="0 0 12 12" fill="none" stroke="#0b70c4" stroke-width="1.0"><path d="M6 .7 L11.3 6 L6 11.3 L.7 6 Z"/><path d="M6 9 V4 M4.9 5 L6 3.6 L7.1 5 M6 7 L7.6 5.8" stroke-width="1"/></svg>
<svg class="mic" style="left:21.3px;top:222.4px" width="12" height="12" viewBox="0 0 12 12" fill="none" stroke="#0b70c4" stroke-width="1.0"><rect x=".9" y="2.3" width="10.6" height="7.7" rx="1" stroke-width=".85"/><path d="M2.6 4.7 L3.3 5.3 L4.4 4 M5.7 4.7 H9.7 M2.6 7.5 L3.3 8.1 L4.4 6.8 M5.7 7.5 H9.7" stroke-width=".8"/></svg>
<svg class="mic" style="left:21.3px;top:242.5px" width="12" height="12" viewBox="0 0 12 12" fill="none" stroke="#0b70c4" stroke-width="1.0"><rect x=".9" y="2.3" width="10.6" height="7.7" rx="1" stroke-width=".85"/><path d="M2.7 4.7 H9.5" stroke-width="1.9"/><path d="M2.7 7.4 H7.2" stroke-width=".9"/></svg>
<svg class="mic" style="left:21.3px;top:262.4px" width="12" height="12" viewBox="0 0 12 12" fill="none" stroke="#0b70c4" stroke-width="1.0"><rect x=".9" y="2.3" width="10.6" height="7.7" rx="1" stroke-width=".85"/><path d="M2.6 4.7 L3.3 5.3 L4.4 4 M5.7 4.7 H9.7 M2.6 7.5 L3.3 8.1 L4.4 6.8 M5.7 7.5 H9.7" stroke-width=".8"/></svg>
<svg class="mic" style="left:21.3px;top:282.5px" width="12" height="12" viewBox="0 0 12 12" fill="none" stroke="#0b70c4" stroke-width="1.0"><path d="M1 1.6 H11 M1 10.2 H11"/><rect x="1" y="4.1" width="10" height="3.7" rx="1"/></svg>
<svg class="mic" style="left:21.3px;top:318.4px" width="12" height="12" viewBox="0 0 12 12" fill="none" stroke="#0b70c4" stroke-width="1.0"><rect x="2.9" y="1.1" width="6.6" height="9.8" rx="3.2"/><path d="M6.2 1.1 V4.8"/></svg>
<svg class="mic" style="left:21.3px;top:353.4px" width="12" height="12" viewBox="0 0 12 12" fill="none" stroke="#0b70c4" stroke-width="1.0"><rect x="1" y="1" width="10.2" height="10.2" rx=".8" stroke-width="1.1"/><rect x="2.6" y="1" width="2.7" height="4.6" fill="#0b70c4" stroke="none"/><rect x="6.6" y="1" width="2.7" height="6.6" fill="#0b70c4" stroke="none"/><rect x="1" y="1" width="10.2" height="1.6" fill="#0b70c4" stroke="none"/></svg>
<svg class="mic" style="left:21.3px;top:373.6px" width="12" height="12" viewBox="0 0 12 12" fill="none" stroke="#0b70c4" stroke-width="1.0"><circle cx="6.2" cy="6" r="5.2"/><path d="M6.2 3.3 V8.7 M3.5 6 H8.9"/></svg>
<svg class="mic" style="left:21.3px;top:394.2px" width="12" height="12" viewBox="0 0 12 12" fill="none" stroke="#0b70c4" stroke-width="1.0"><circle cx="6.2" cy="6" r="3.9" stroke-width="1.4"/><circle cx="6.2" cy="6" r="5" stroke-width="1.3" stroke-dasharray="1.3 2.63"/><path d="M6.2 6 L8.6 4.6 M6.2 6 H2.6" stroke-width=".8"/></svg>
<svg class="mic" style="left:21.3px;top:414.3px" width="12" height="12" viewBox="0 0 12 12" fill="none" stroke="#0b70c4" stroke-width="1.0"><path d="M6.6 2.8 H3.1 Q1.6 2.8 1.6 4.3 V8.9 Q1.6 10.4 3.1 10.4 H8.7 Q10.2 10.4 10.2 8.9 V5.6"/><circle cx="9.6" cy="2.1" r="1.7" fill="#0b70c4" stroke="none"/></svg>
</div>
<svg id="red" width="170" height="34" viewBox="0 0 170 34"><path fill-rule="evenodd" fill="#e60808" d="M1 0 H166.8 V29.45 H1 Z M5.8 5 H162.3 V25 H5.8 Z"/></svg>
</body></html>
